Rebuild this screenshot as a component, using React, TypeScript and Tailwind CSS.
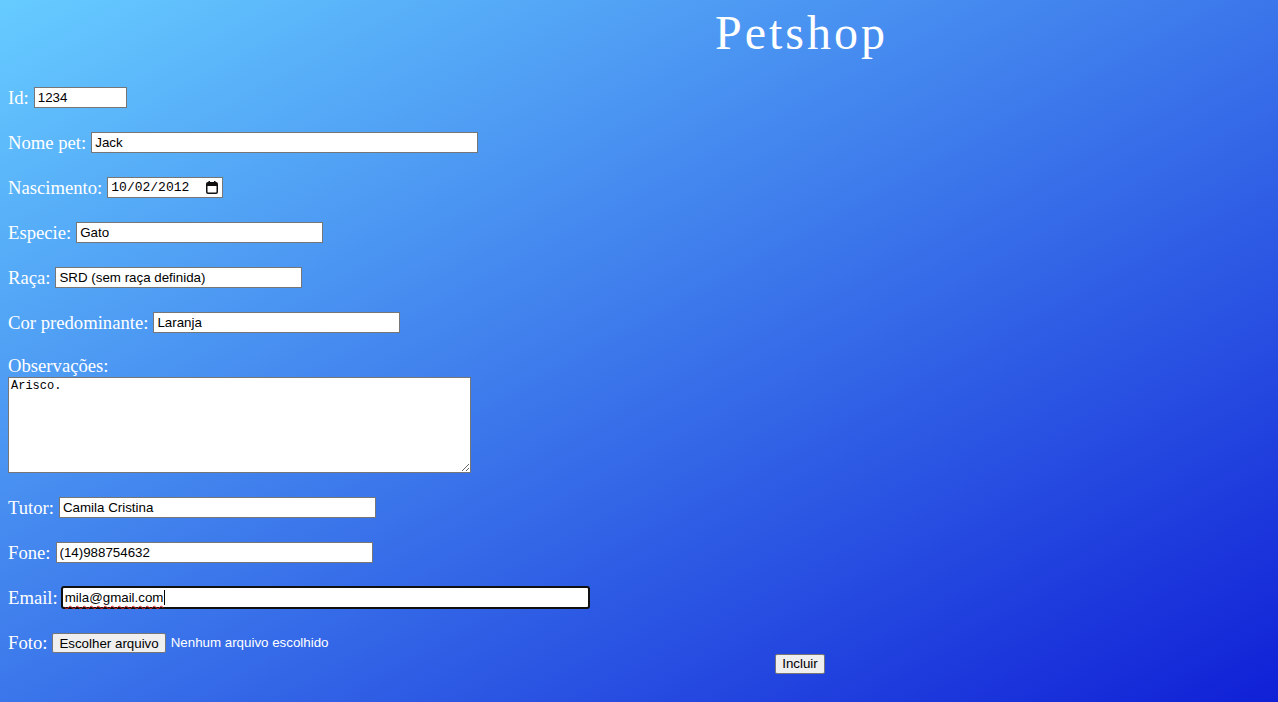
import React from 'react';

const fields = [
  { label: 'Id:', value: '1234', w: 'w-[93px]' },
  { label: 'Nome pet:', value: 'Jack', w: 'w-[387px]' },
  { label: 'Nascimento:', value: '10/02/2012', w: 'w-[116px]', date: true },
  { label: 'Especie:', value: 'Gato', w: 'w-[247px]' },
  { label: 'Raça:', value: 'SRD (sem raça definida)', w: 'w-[247px]' },
  { label: 'Cor predominante:', value: 'Laranja', w: 'w-[247px]' },
];

const contato = [
  { label: 'Tutor:', value: 'Camila Cristina', w: 'w-[317px]' },
  { label: 'Fone:', value: '(14)988754632', w: 'w-[317px]' },
];

const CalendarIcon = () => (
  <svg width="12" height="13" viewBox="0 0 12 13" fill="none" className="ml-auto mr-[4px]">
    <rect x="0.75" y="1.75" width="10.5" height="10.5" rx="1.2" stroke="#111" strokeWidth="1.5" />
    <rect x="1" y="2" width="10" height="3" fill="#111" />
    <rect x="2.5" y="0" width="1.5" height="2.5" fill="#111" />
    <rect x="8" y="0" width="1.5" height="2.5" fill="#111" />
  </svg>
);

const Row = ({ label, children }: any) => (
  <div className="flex h-[21px] items-center gap-[5px]">
    <span className="leading-[21px]">{label}</span>
    {children}
  </div>
);

export default function App() {
  return (
    <div className="min-h-screen bg-[linear-gradient(to_bottom_right,#66ccff,#1020d6)] px-[8px] font-['Liberation_Serif',serif] text-[18.67px] text-white">
      <h1 className="pl-[325px] pt-[9px] text-center text-[48px] font-normal leading-[48px] tracking-[3px]">Petshop</h1>

      <form className="mt-[30px] flex flex-col">
        <div className="flex flex-col gap-[24px]">
          {fields.map((f) => (
            <Row key={f.label} label={f.label}>
              {f.date ? (
                <div className={`flex h-[21px] ${f.w} items-center border border-[#767676] bg-white pl-[3px] font-['Liberation_Mono',monospace] text-[13px] text-black`}>
                  {f.value}
                  <CalendarIcon />
                </div>
              ) : (
                <input
                  readOnly
                  defaultValue={f.value}
                  className={`h-[21px] ${f.w} border border-[#767676] bg-white px-[3px] font-['Liberation_Sans',Arial,sans-serif] text-[13.33px] text-black outline-none`}
                />
              )}
            </Row>
          ))}
        </div>

        <div className="mt-[22px] h-[22px] leading-[21px]">Observações:</div>
        <textarea
          readOnly
          defaultValue="Arisco."
          className="h-[96px] w-[463px] border border-[#767676] bg-white px-[2px] py-[1px] font-['Liberation_Mono',monospace] text-[12px] leading-[15px] text-black outline-none"
        />

        <div className="mt-[24px] flex flex-col gap-[24px]">
          {contato.map((f) => (
            <Row key={f.label} label={f.label}>
              <input
                readOnly
                defaultValue={f.value}
                className={`h-[21px] ${f.w} border border-[#767676] bg-white px-[3px] font-['Liberation_Sans',Arial,sans-serif] text-[13.33px] text-black outline-none`}
              />
            </Row>
          ))}
        </div>

        <div className="mt-[23px] flex h-[23px] items-center gap-[3px]">
          <span className="leading-[21px]">Email:</span>
          <div className="flex h-[23px] w-[529px] items-center rounded-[3px] border-2 border-[#101010] bg-white pl-[2px] font-['Liberation_Sans',Arial,sans-serif] text-[13.33px] text-black">
            <span className="underline decoration-[#e02020] decoration-wavy decoration-1 underline-offset-[3px]">mila@gmail.com</span>
            <span className="ml-[1px] h-[15px] w-px bg-black" />
          </div>
        </div>

        <div className="mt-[23px] flex h-[21px] items-center gap-[5px]">
          <span className="leading-[21px]">Foto:</span>
          <button type="button" className="h-[20px] rounded-[2px] border border-[#767676] bg-[#efefef] px-[6px] font-['Liberation_Sans',Arial,sans-serif] text-[13.33px] text-black">
            Escolher arquivo
          </button>
          <span className="font-['Liberation_Sans',Arial,sans-serif] text-[13.33px]">Nenhum arquivo escolhido</span>
        </div>

        <div className="mt-[1px] flex justify-center pl-[322px]">
          <button type="submit" className="h-[20px] rounded-[2px] border border-[#767676] bg-[#efefef] px-[6px] font-['Liberation_Sans',Arial,sans-serif] text-[13.33px] leading-[18px] text-black">
            Incluir
          </button>
        </div>
      </form>
    </div>
  );
}
